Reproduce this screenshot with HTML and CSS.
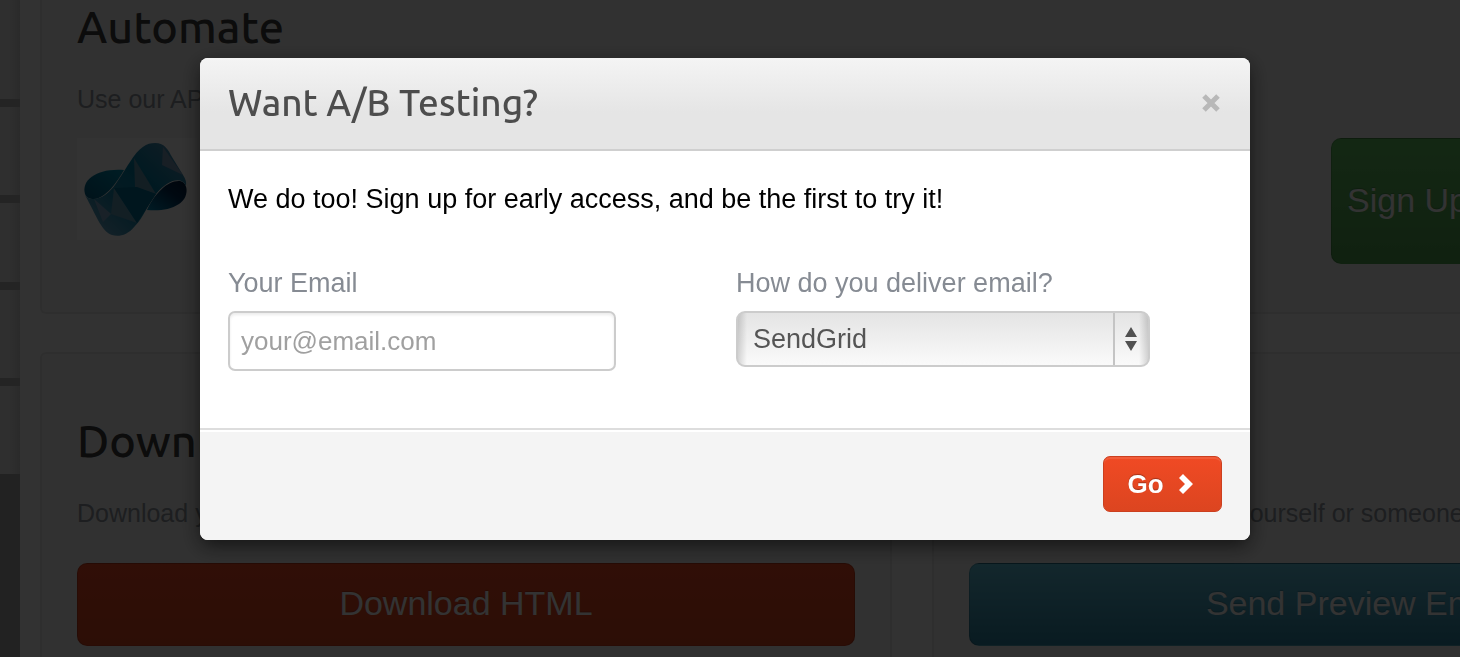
FILE: index.html
```html
<!DOCTYPE html>
<html lang="en">

<head>
    <meta charset="UTF-8">
    <meta name="viewport" content="width=device-width, initial-scale=1.0">
    <link rel="stylesheet" href="styles.css">
    <title>Want A/B Testing?</title>
</head>

<body>
    <div class="page">
        <aside class="sidebar">
            <div class="item first"></div>
            <div class="item"></div>
            <div class="item short"></div>
            <div class="item"></div>
            <div class="item"></div>
        </aside>

        <main class="cards">
            <section class="card wide">
                <h2>Automate</h2>
                <p>Use our API</p>
                <div class="partner">
                    <svg class="logo" viewBox="0 0 120 102" aria-hidden="true">
                        <defs>
                            <linearGradient id="ribbon" x1="0" y1="1" x2="1" y2="0">
                                <stop offset="0" stop-color="#7fb0cf" />
                                <stop offset=".35" stop-color="#1a87ad" />
                                <stop offset=".6" stop-color="#007ea6" />
                                <stop offset="1" stop-color="#5f93b8" />
                            </linearGradient>
                            <linearGradient id="loopLeft" x1="0" y1="1" x2="1" y2="0">
                                <stop offset="0" stop-color="#005b80" />
                                <stop offset="1" stop-color="#0091b5" />
                            </linearGradient>
                            <linearGradient id="loopRight" x1="0" y1="1" x2="1" y2="0">
                                <stop offset="0" stop-color="#0089b8" />
                                <stop offset=".6" stop-color="#002d55" />
                                <stop offset="1" stop-color="#001838" />
                            </linearGradient>
                        </defs>
                        <rect width="120" height="102" fill="#fcfcfc" />
                        <path d="M8 56C4 42 20 30 47 32C40 44 29 60 17 61C12 61 9 59 8 56Z" fill="url(#loopLeft)" />
                        <path d="M70 72C78 55 91 42 103 43C112 45 112 60 102 66C93 72 82 73 70 72Z" fill="url(#loopRight)" />
                        <path d="M17 61C33 60 41 42 53 24C62 9 70 5 78 5C88 5 91 12 95 19L106 37Q110 43 109 48C105 38 91 41 79 56C70 67 67 79 58 88C50 98 41 99 35 97C25 94 20 79 8 57C11 61 14 61 17 61Z" fill="url(#ribbon)" />
                        <path d="M57 20L79 56L58 49Z" fill="#5f94ae" />
                        <path d="M86 9L106 37L85 27Z" fill="#7899b8" />
                        <path d="M37 50L60 85L34 76Z" fill="#5f99b5" />
                        <path d="M60 49L79 56L60 85L37 50Z" fill="#007095" />
                        <path d="M17 61L34 76L26 84Z" fill="#7fa7c7" />
                    </svg>
                    <button type="button" class="btn green">Sign Up</button>
                </div>
            </section>

            <section class="card">
                <h2>Download</h2>
                <p>Download your template</p>
                <button type="button" class="btn red">Download HTML</button>
            </section>

            <section class="card">
                <h2>Preview</h2>
                <p>Send a sample email to yourself or someone</p>
                <button type="button" class="btn blue">Send Preview Email</button>
            </section>
        </main>
    </div>

    <div class="backdrop">
        <form class="modal" role="dialog" aria-labelledby="modalTitle">
            <header class="modal-header">
                <h3 id="modalTitle">Want A/B Testing?</h3>
                <button type="button" class="close" aria-label="Close">
                    <svg viewBox="0 0 20 20" aria-hidden="true">
                        <path d="M3 3L17 17M17 3L3 17" />
                    </svg>
                </button>
            </header>
            <div class="modal-body">
                <p>We do too! Sign up for early access, and be the first to try it!</p>
                <div class="fields">
                    <div class="field">
                        <label for="email">Your Email</label>
                        <input type="email" id="email" name="email" placeholder="your@email.com">
                    </div>
                    <div class="field">
                        <label for="service">How do you deliver email?</label>
                        <div class="select">
                            <select id="service" name="service">
                                <option>SendGrid</option>
                            </select>
                            <svg class="arrows" viewBox="0 0 12 24" aria-hidden="true">
                                <path d="M6 0L12 10H0ZM0 14H12L6 24Z" />
                            </svg>
                        </div>
                    </div>
                </div>
            </div>
            <footer class="modal-footer">
                <button type="submit" class="go">Go
                    <svg viewBox="0 0 16 22" aria-hidden="true">
                        <path d="M1 5L5 1L15 11L5 21L1 17L7 11Z" />
                    </svg>
                </button>
            </footer>
        </form>
    </div>
</body>

</html>
```
FILE: styles.css
```css
* {
    margin: 0;
    padding: 0;
    box-sizing: border-box;
}

body {
    font-family: "Liberation Sans", Arial, sans-serif;
    font-size: 27px;
    line-height: 32px;
    background: #fafafa;
    overflow: hidden;
}

button,
input,
select {
    font: inherit;
}

h2,
h3 {
    font-family: Ubuntu, "Noto Sans", sans-serif;
    font-weight: 500;
}

/* page behind the dialog */
.page {
    display: flex;
    height: 100vh;
    overflow: hidden;
}

.sidebar {
    flex: 0 0 20px;
    display: flex;
    flex-direction: column;
    gap: 8px;
    background: #aaa;
}

.item {
    height: 88px;
    background: linear-gradient(to right, #e8e8e8 50%, #d2d2d2);
    box-shadow: 0 8px #b4b4b4;
}

.item.first {
    height: 99px;
}

.item.short {
    height: 79px;
}

.item:last-child {
    box-shadow: none;
}

.cards {
    flex: 1;
    min-width: 0;
    display: grid;
    grid-template-columns: 60% 60%;
    grid-template-rows: 314px auto;
    gap: 38px 40px;
    padding-left: 20px;
}

.card {
    padding: 60px 35px;
    background: #f5f5f5;
    border: 2px solid #e6e6e6;
    border-radius: 6px;
    white-space: nowrap;
}

.card.wide {
    grid-column: span 2;
    padding-top: 0;
    border-top: none;
    border-radius: 0 0 6px 6px;
}

.card h2 {
    font-size: 45px;
    line-height: 54px;
    color: #3c3c3c;
}

.card p {
    padding: 29px 0 23px;
    font-size: 25px;
    color: #90979e;
}

.partner {
    display: flex;
    justify-content: space-between;
    align-items: flex-start;
}

.logo {
    width: 120px;
    height: 102px;
}

.btn {
    width: 100%;
    height: 83px;
    padding-bottom: 3px;
    border: 1px solid rgba(0, 0, 0, .15);
    border-radius: 10px;
    font-size: 34px;
    color: #fff;
    text-shadow: 0 -1px 1px rgba(0, 0, 0, .2);
}

.red {
    background: linear-gradient(#f04a24, #dc4520);
}

.card .red,
.card .blue {
    margin-top: 11px;
}

.green {
    width: 416px;
    height: 126px;
    padding-left: 15px;
    text-align: left;
    background: linear-gradient(#62c462, #51a351);
}

.blue {
    background: linear-gradient(#5fc2dc, #2f85a4);
}

/* dialog */
.backdrop {
    position: fixed;
    inset: 0;
    padding: 58px 10px 58px 0;
    background: rgba(0, 0, 0, .8);
}

.modal {
    max-width: 1050px;
    margin: 0 auto;
    border-radius: 8px;
    background: #fff;
    box-shadow: 0 6px 20px rgba(0, 0, 0, .6);
    overflow: hidden;
}

.modal-header {
    display: flex;
    justify-content: space-between;
    align-items: center;
    height: 93px;
    padding: 0 28px 2px;
    background: linear-gradient(#f4f4f4, #e5e5e5 60%);
    border-bottom: 2px solid #cfcfcf;
}

.modal-header h3 {
    font-size: 37px;
    line-height: 48px;
    color: #4d4d4d;
}

.close {
    width: 22px;
    height: 20px;
    border: none;
    background: none;
    cursor: pointer;
}

.close svg {
    display: block;
    width: 22px;
    height: 20px;
    fill: none;
    stroke: #b8b8b8;
    stroke-width: 5;
}

.modal-body {
    padding: 32px 28px 57px;
    color: #000;
}

.fields {
    display: grid;
    grid-template-columns: 1fr 1fr;
    gap: 22px;
    margin-top: 52px;
}

.field label {
    display: block;
    margin-bottom: 12px;
    color: #868b93;
}

.field input {
    width: 388px;
    max-width: 100%;
    height: 60px;
    padding: 0 11px;
    border: 2px solid #ccc;
    border-radius: 7px;
    background: #fff;
    box-shadow: inset 0 2px 3px rgba(0, 0, 0, .08);
    font-size: 26px;
}

.field input::placeholder {
    color: #a0a0a0;
}

.select {
    position: relative;
    width: 414px;
    max-width: 100%;
}

.select select {
    display: block;
    width: 100%;
    height: 56px;
    padding: 0 50px 0 15px;
    appearance: none;
    border: 2px solid #ccc;
    border-radius: 9px;
    color: #555;
    background:
        linear-gradient(#c4c4c4, #c4c4c4) right 33px top / 2px 100% no-repeat,
        linear-gradient(to right, rgba(0, 0, 0, .15), transparent 9px, transparent calc(100% - 9px), rgba(0, 0, 0, .15)),
        linear-gradient(#e4e4e4, #fafafa);
}

.arrows {
    position: absolute;
    top: 16px;
    right: 13px;
    width: 12px;
    height: 24px;
    fill: #505050;
    pointer-events: none;
}

.modal-footer {
    display: flex;
    justify-content: flex-end;
    padding: 26px 28px 28px;
    background: #f4f4f4;
    border-top: 2px solid #ddd;
    box-shadow: inset 0 2px #fff;
}

.go {
    display: flex;
    align-items: center;
    justify-content: center;
    gap: 14px;
    width: 119px;
    height: 56px;
    padding-right: 4px;
    border: 1px solid #cb3f1f;
    border-radius: 7px;
    background: linear-gradient(#f04a24, #dc4520);
    box-shadow: inset 0 2px rgba(255, 255, 255, .1);
    color: #fff;
    font-size: 26px;
    font-weight: bold;
    text-shadow: 0 -1px 1px rgba(0, 0, 0, .3);
    cursor: pointer;
}

.go svg {
    width: 16px;
    height: 22px;
    fill: #fff;
}
```
